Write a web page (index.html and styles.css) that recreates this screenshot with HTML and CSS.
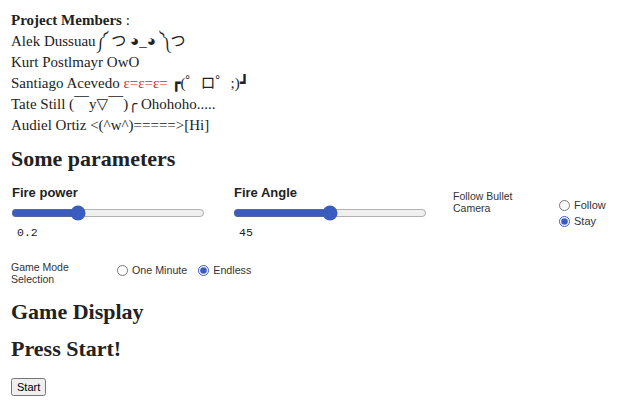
FILE: index.html
```html
<!DOCTYPE html>
<html>
<head>
<meta charset="utf-8">
<link rel="stylesheet" href="styles.css">
</head>
<body>
<div class="page">
  <section class="members">
    <div class="line title">Project Members <span class="normal">:</span></div>
    <div class="line">Alek Dussuau༼ つ ◕_◕ ༽つ</div>
    <div class="line">Kurt Postlmayr OwO</div>
    <div class="line">Santiago Acevedo <span class="red">ε=ε=ε=</span> ┏(゜ロ゜;)┛</div>
    <div class="line">Tate Still (￣y▽￣)╭ Ohohoho.....</div>
    <div class="line">Audiel Ortiz &lt;(^w^)=====&gt;[Hi]</div>
  </section>

  <h2 class="heading h-params">Some parameters</h2>

  <div class="params">
    <div class="param">
      <div class="param-label">Fire power</div>
      <input class="slider" type="range" min="0" max="0.6" step="0.1" value="0.2">
      <div class="param-value">0.2</div>
    </div>
    <div class="param">
      <div class="param-label">Fire Angle</div>
      <input class="slider" type="range" min="0" max="90" step="1" value="45">
      <div class="param-value">45</div>
    </div>
    <div class="camera">
      <div class="small-label">Follow Bullet<br>Camera</div>
      <div class="radio-col">
        <label class="radio"><input type="radio" name="cam"> Follow</label>
        <label class="radio"><input type="radio" name="cam" checked> Stay</label>
      </div>
    </div>
  </div>

  <div class="mode">
    <div class="small-label">Game Mode<br>Selection</div>
    <label class="radio"><input type="radio" name="mode"> One Minute</label>
    <label class="radio"><input type="radio" name="mode" checked> Endless</label>
  </div>

  <h2 class="heading h-display">Game Display</h2>
  <h2 class="heading h-press">Press Start!</h2>

  <button class="start">Start</button>
</div>
</body>
</html>
```

FILE: styles.css
```css
html, body {
  margin: 0;
  padding: 0;
  background: #fff;
}
body {
  font-family: "Liberation Serif", "DejaVu Serif", "Noto Sans CJK JP", serif;
  color: #222;
}
.page {
  padding: 10px 11px 0 11px;
}
.members {
  font-size: 15px;
  line-height: 21px;
}
.title {
  font-weight: bold;
}
.normal {
  font-weight: normal;
}
.red {
  color: #e02525;
}
.heading {
  font-size: 22px;
  font-weight: bold;
  margin: 0;
  line-height: 26px;
  color: #222;
}
.h-params {
  margin-top: 10px;
}
.params {
  display: flex;
  align-items: flex-start;
  margin-top: 13px;
  font-family: "Liberation Sans", Arial, sans-serif;
}
.param {
  display: flex;
  flex-direction: column;
  width: 222px;
}
.param-label {
  font-size: 13px;
  font-weight: bold;
  line-height: 16px;
  padding-left: 1px;
}
.slider {
  width: 194px;
  margin: 4px 0 0 0;
  accent-color: #3a5bbf;
}
.param-value {
  font-family: "Liberation Mono", monospace;
  font-size: 11.5px;
  margin-top: 5px;
  padding-left: 6px;
  color: #222;
}
.camera {
  display: flex;
  align-items: flex-start;
  margin-left: -2px;
}
.small-label {
  font-family: "Liberation Sans", Arial, sans-serif;
  font-size: 10.5px;
  line-height: 12px;
  color: #333;
}
.camera .small-label {
  width: 106px;
  margin-top: 5px;
}
.radio-col {
  display: flex;
  flex-direction: column;
  margin-top: 12px;
}
.radio {
  font-family: "Liberation Sans", Arial, sans-serif;
  font-size: 11px;
  color: #333;
  display: flex;
  align-items: center;
  line-height: 16px;
}
.radio input {
  margin: 0 4px 0 0;
  width: 11px;
  height: 11px;
  accent-color: #3a5bbf;
}
.mode {
  display: flex;
  align-items: flex-start;
  margin-top: 22px;
}
.mode .small-label {
  width: 106px;
}
.mode .radio {
  font-size: 10.7px;
  margin-right: 11px;
  margin-top: 1px;
}
.h-display {
  margin-top: 14px;
}
.h-press {
  margin-top: 11px;
}
.start {
  margin-top: 16px;
  font-family: "Liberation Sans", Arial, sans-serif;
  font-size: 11px;
  padding: 1px 4px;
}
```
